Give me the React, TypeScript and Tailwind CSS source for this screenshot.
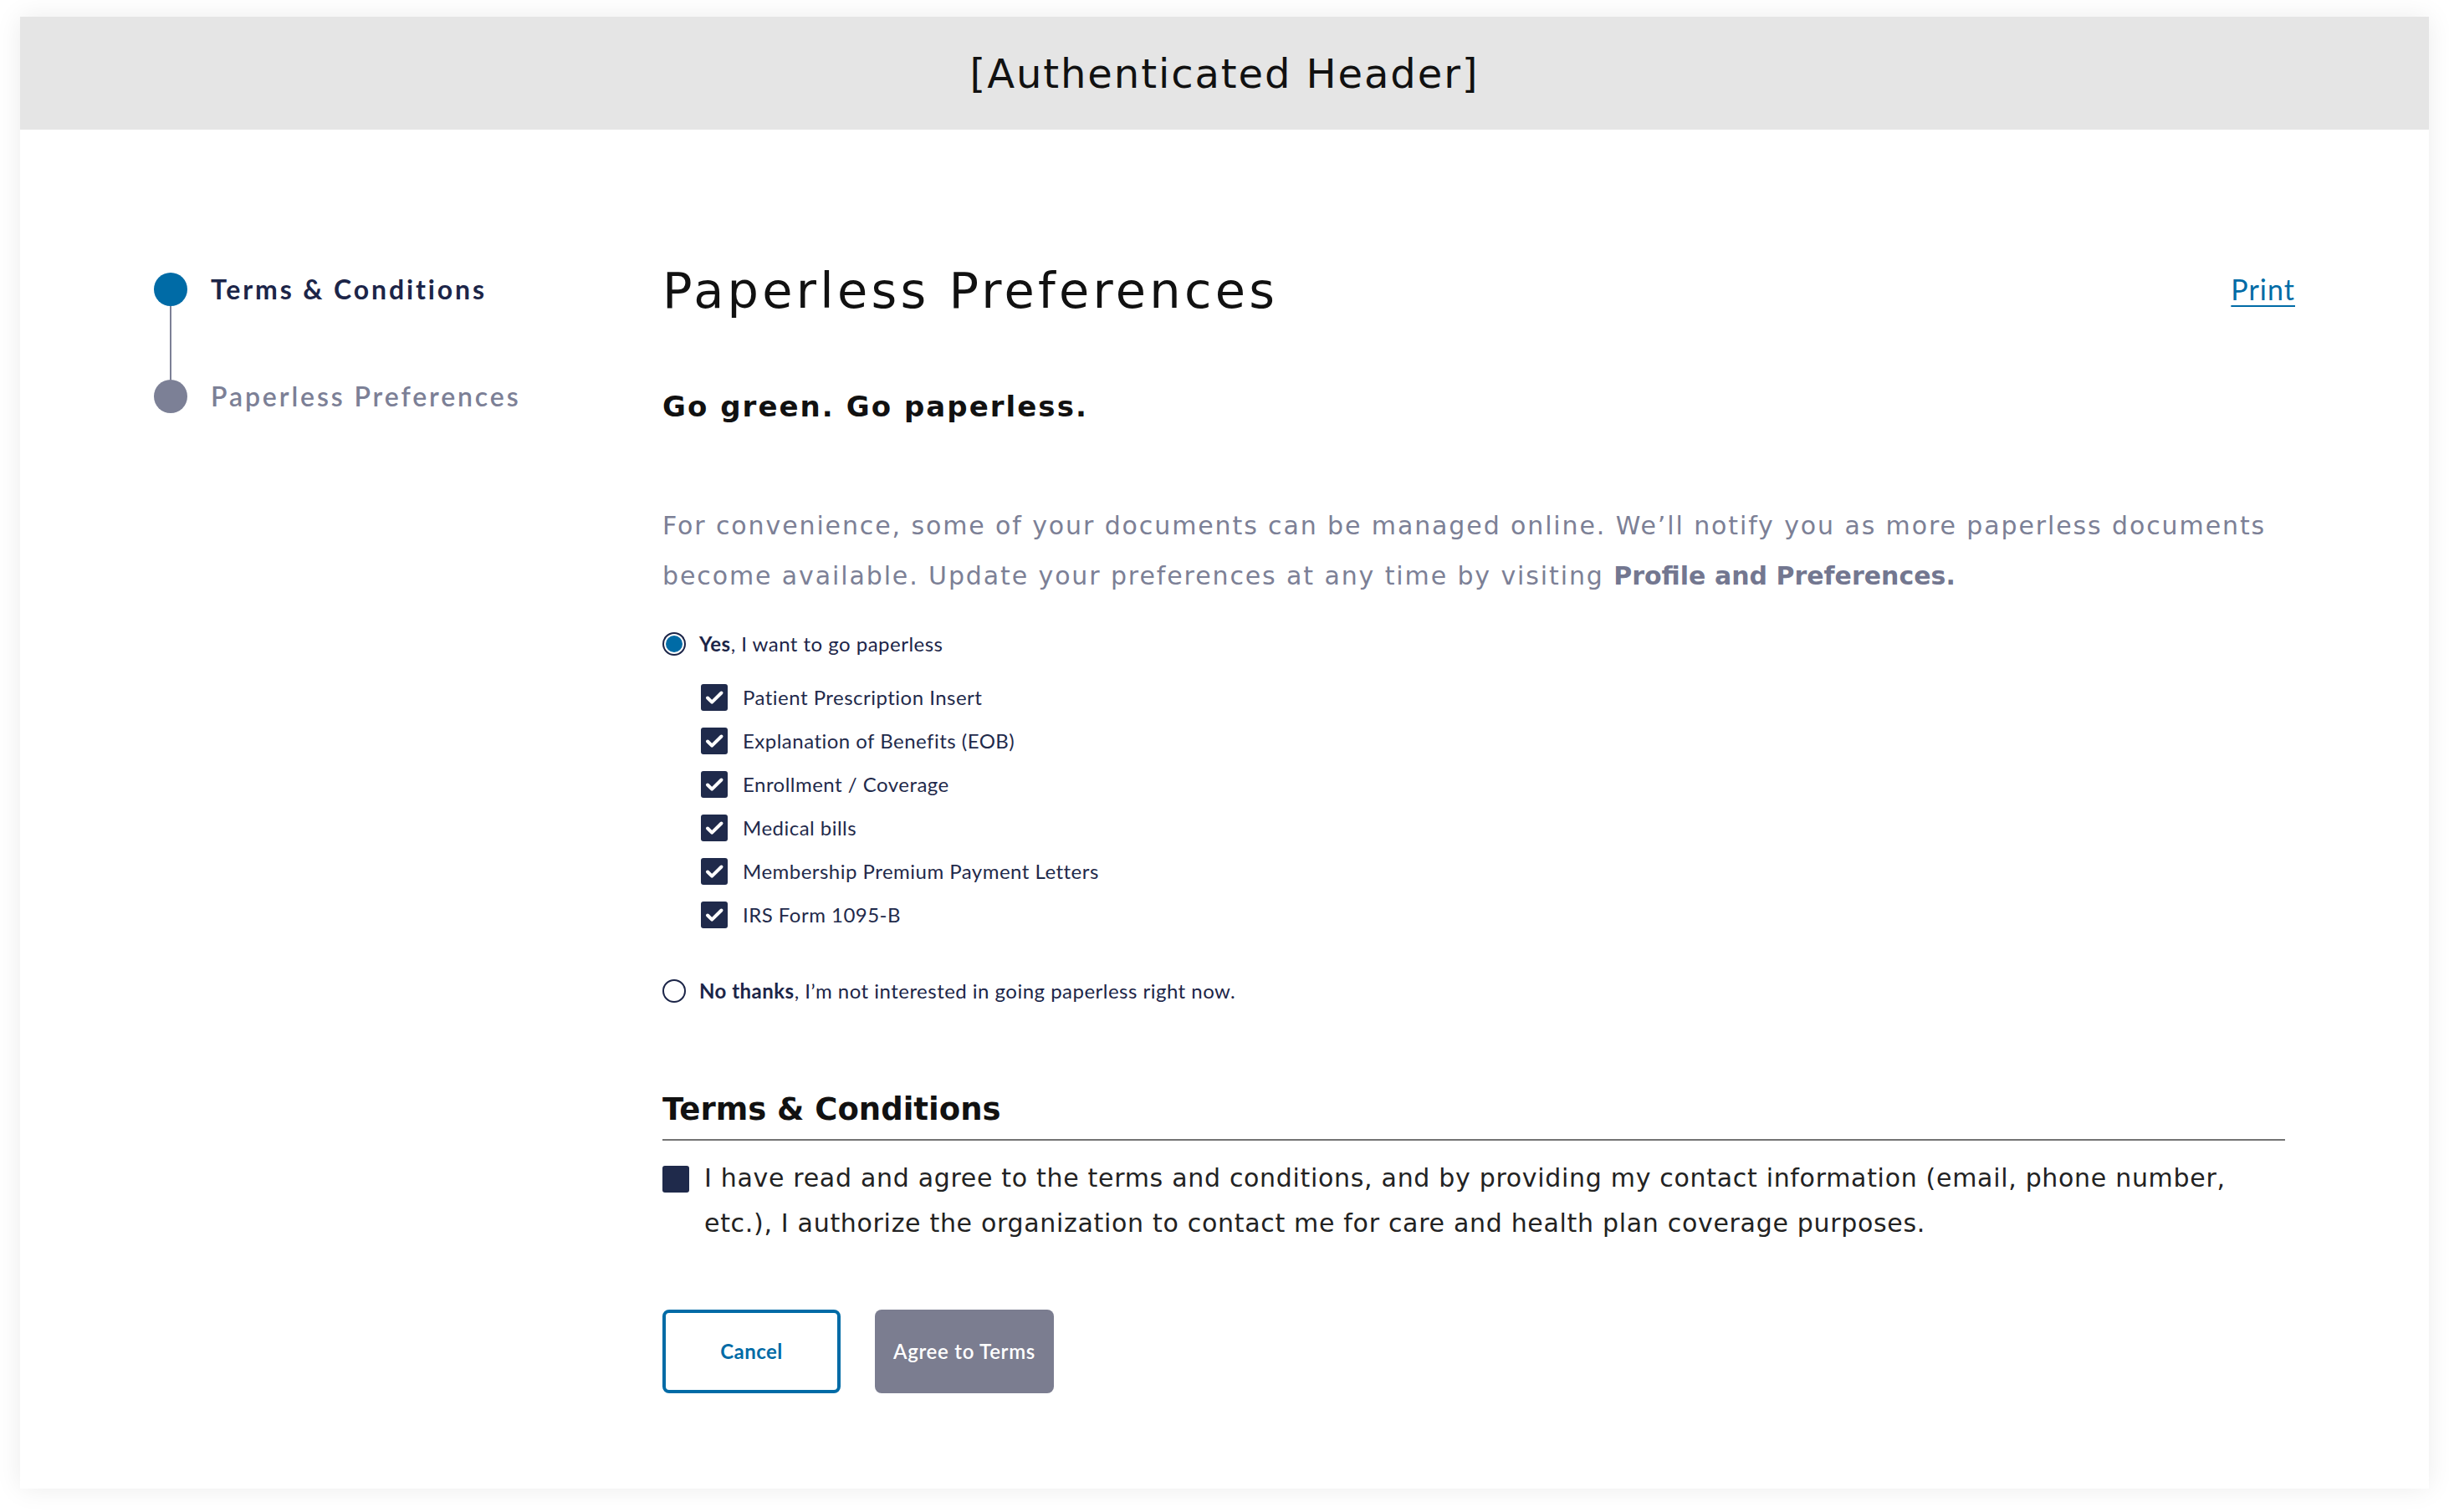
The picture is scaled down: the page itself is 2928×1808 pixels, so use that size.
import React from 'react';

// Proxima-like copy uses Lato, the wide Gotham-like copy uses DejaVu Sans
const SANS = { fontFamily: 'Lato, "Open Sans", Arial, sans-serif' };
const WIDE = { fontFamily: '"DejaVu Sans", Verdana, sans-serif' };

const documents = [
  'Patient Prescription Insert',
  'Explanation of Benefits (EOB)',
  'Enrollment / Coverage',
  'Medical bills',
  'Membership Premium Payment Letters',
  'IRS Form 1095-B',
];

const CheckBox = ({ checked }: { checked: boolean }) => (
  <span className="flex h-[32px] w-[32px] shrink-0 items-center justify-center rounded-[3px] bg-[#1f2a4b]">
    {checked && (
      <svg width="32" height="32" viewBox="0 0 32 32" fill="none">
        <path d="M8 16.5l5.2 5.2L24.5 10.5" stroke="#fff" strokeWidth="4" strokeLinecap="round" strokeLinejoin="round" />
      </svg>
    )}
  </span>
);

const Radio = ({ selected }: { selected: boolean }) => (
  <span className="flex h-[28px] w-[28px] shrink-0 items-center justify-center rounded-full border-2 border-[#1c2548] bg-white">
    {selected && <span className="h-[20px] w-[20px] rounded-full bg-[#006ba6]" />}
  </span>
);

const Stepper = () => (
  <div className="flex flex-col">
    <div className="flex items-center gap-[28px]">
      <span className="h-[40px] w-[40px] rounded-full bg-[#006ba6]" />
      <span className="text-[32px] font-bold leading-[40px] tracking-[0.09em] text-[#1c2548]">Terms &amp; Conditions</span>
    </div>
    <div className="ml-[19px] h-[88px] w-[2px] bg-[#7c8096]" />
    <div className="flex items-center gap-[28px]">
      <span className="h-[40px] w-[40px] rounded-full bg-[#7c8096]" />
      <span className="text-[32px] font-semibold leading-[40px] tracking-[0.09em] text-[#7c8096]">Paperless Preferences</span>
    </div>
  </div>
);

export default function App() {
  return (
    <div className="min-h-screen bg-white px-[24px] pb-[28px] pt-[20px]" style={SANS}>
      <div className="flex h-[1760px] flex-col bg-white shadow-[0_0_30px_rgba(0,0,0,0.08)]">
        <header
          className="flex h-[135px] shrink-0 items-center justify-center bg-[#e5e5e5] text-[48px] font-normal tracking-[0.04em] text-[#111]"
          style={WIDE}
        >
          [Authenticated Header]
        </header>

        <div className="flex pt-[163px]">
          <aside className="w-[768px] shrink-0 pl-[160px] pt-[8px]">
            <Stepper />
          </aside>

          <main className="flex-1 pr-[160px]">
            <div className="flex h-[60px] items-start justify-between">
              <h1 className="text-[59px] font-normal leading-[60px] tracking-[0.072em] text-[#111]" style={WIDE}>
                Paperless Preferences
              </h1>
              <a href="#" className="text-[34px] leading-[56px] tracking-[0.03em] text-[#006ba6] underline decoration-2 underline-offset-[6px]">
                Print
              </a>
            </div>

            <h2 className="mt-[88px] text-[34px] font-bold leading-[40px] tracking-[0.06em] text-[#111]" style={WIDE}>
              Go green. Go paperless.
            </h2>

            <p className="mt-[93px] text-[30px] font-normal leading-[60px] tracking-[0.063em] text-[#7c8096]" style={WIDE}>
              For convenience, some of your documents can be managed online. We’ll notify you as more paperless documents
              become available. Update your preferences at any time by visiting{' '}
              <span className="font-bold tracking-normal text-[#737790]">Profile and Preferences.</span>
            </p>

            <label className="mt-[35px] flex h-[32px] items-center gap-[16px] text-[24px] tracking-[0.02em] text-[#1c2548]">
              <Radio selected />
              <span>
                <b className="font-bold">Yes</b>, I want to go paperless
              </span>
            </label>

            <ul className="mt-[22px] pl-[46px]">
              {documents.map((doc) => (
                <li key={doc} className="flex h-[52px] items-center gap-[18px] text-[24px] tracking-[0.02em] text-[#1f2a4b]">
                  <CheckBox checked />
                  <span>{doc}</span>
                </li>
              ))}
            </ul>

            <label className="mt-[49px] flex h-[32px] items-center gap-[16px] text-[24px] tracking-[0.02em] text-[#1c2548]">
              <Radio selected={false} />
              <span>
                <b className="font-bold">No thanks</b>, I’m not interested in going paperless right now.
              </span>
            </label>

            <section className="mr-[12px] mt-[103px]">
              <h3
                className="border-b-2 border-[#737373] pb-[12px] text-[37px] font-bold leading-[46px] text-[#111]"
                style={WIDE}
              >
                Terms &amp; Conditions
              </h3>
              <div className="mt-[18px] flex items-start gap-[18px]">
                <span className="mt-[12px]">
                  <CheckBox checked={false} />
                </span>
                <p className="text-[30px] leading-[54px] tracking-[0.023em] text-[#222]" style={WIDE}>
                  I have read and agree to the terms and conditions, and by providing my contact information (email, phone number,
                  etc.), I authorize the organization to contact me for care and health plan coverage purposes.
                </p>
              </div>
            </section>

            <div className="mt-[76px] flex gap-[41px]">
              <button className="h-[100px] w-[213px] rounded-[8px] border-[4px] border-[#006ba6] bg-white text-[24px] font-bold tracking-[0.02em] text-[#006ba6]">
                Cancel
              </button>
              <button className="h-[100px] w-[214px] rounded-[8px] bg-[#7b7d90] text-[24px] font-semibold tracking-[0.03em] text-white">
                Agree to Terms
              </button>
            </div>
          </main>
        </div>
      </div>
    </div>
  );
}
